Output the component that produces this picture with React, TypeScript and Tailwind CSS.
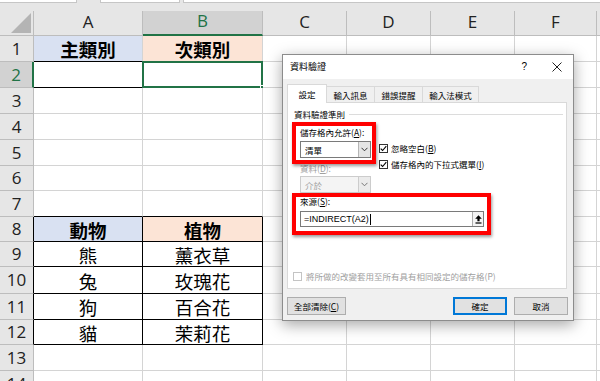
import React from "react";

const CJK = "font-['Noto_Sans_CJK_TC','Noto_Sans',sans-serif]";

const colW = ["w-[109px]", "w-[120px]", "w-[84px]", "w-[84px]", "w-[84px]", "w-[82px]"];
const letters = ["A", "B", "C", "D", "E", "F"];
const rowH: Record<number, string> = {
  1: "h-[26px]", 2: "h-[26px]", 3: "h-[26px]", 4: "h-[26px]", 5: "h-[26px]",
  6: "h-[25px]", 7: "h-[26px]", 8: "h-[25px]", 9: "h-[25px]", 10: "h-[27px]",
  11: "h-[26px]", 12: "h-[25px]", 13: "h-[26px]", 14: "h-[26px]",
};
const data: Record<number, [string, string]> = {
  1: ["主類別", "次類別"],
  8: ["動物", "植物"],
  9: ["熊", "薰衣草"],
  10: ["兔", "玫瑰花"],
  11: ["狗", "百合花"],
  12: ["貓", "茉莉花"],
};

function Cell({ r, c }: { r: number; c: number }) {
  const d = data[r];
  const txt = d && c < 2 ? d[c] : "";
  const blackR = c <= 1 && (r === 2 || (r >= 8 && r <= 12));
  const blackB = c <= 1 && (r === 1 || r === 2 || (r >= 7 && r <= 12));
  const head = r === 1 || r === 8;
  const bg = head ? (c === 0 ? "bg-[#d9e1f2]" : c === 1 ? "bg-[#fce4d6]" : "bg-white") : "bg-white";
  return (
    <div
      className={`${colW[c]} h-full relative flex items-center justify-center pt-[2px] border-r border-b ${
        blackR ? "border-r-black" : "border-r-[#d4d4d4]"
      } ${blackB ? "border-b-black" : "border-b-[#d4d4d4]"} ${bg} ${CJK} text-[18.5px] leading-none text-black ${
        head ? "font-bold" : "font-normal"
      }`}
    >
      {txt}
      {r === 2 && c === 1 && (
        <>
          <div className="absolute left-[-1px] top-[-1px] right-[-1px] bottom-[-1px] border-2 border-[#217346]" />
          <div className="absolute right-[-4px] bottom-[-4px] w-[6px] h-[6px] bg-[#217346] border border-white" />
        </>
      )}
    </div>
  );
}

function Sheet() {
  const rows = Array.from({ length: 14 }, (_, i) => i + 1);
  return (
    <div className="flex flex-col">
      <div className="h-[11px] bg-[#e6e6e6] flex items-start">
        <div className="w-[77px] h-[3px] bg-white border-r border-b border-[#c6c6c6]" />
        <div className="ml-[23px] w-[80px] h-[3px] bg-white border-x border-b border-[#c6c6c6]" />
        <div className="ml-[3px] flex-1 h-[3px] bg-white border-l border-b border-[#c6c6c6]" />
      </div>
      <div className="flex h-[25px]">
        <div className="w-[34px] h-full bg-[#e6e6e6] border-r border-b border-[#bdbdbd] flex items-end justify-end p-[2px]">
          <svg width="20" height="20" viewBox="0 0 20 20">
            <polygon points="20,0 20,20 0,20" fill="#b4b4b4" />
          </svg>
        </div>
        {letters.map((l, i) => (
          <div
            key={l}
            className={`${colW[i]} h-full flex items-center justify-center pb-[3px] border-r border-r-[#bdbdbd] font-['Open_Sans',sans-serif] text-[17px] ${
              i === 1
                ? "bg-[#d2d2d2] text-[#217346] border-b-2 border-b-[#217346]"
                : "bg-[#e6e6e6] text-[#222] border-b border-b-[#bdbdbd]"
            }`}
          >
            {l}
          </div>
        ))}
        <div className="flex-1 h-full bg-[#e6e6e6] border-b border-[#bdbdbd]" />
      </div>
      {rows.map((r) => (
        <div key={r} className={`flex ${rowH[r]}`}>
          <div
            className={`w-[34px] h-full flex items-center justify-center border-b border-b-[#bdbdbd] font-['Open_Sans',sans-serif] text-[17px] ${
              r === 2
                ? "bg-[#d2d2d2] text-[#217346] border-r-2 border-r-[#217346]"
                : r >= 8 && r <= 12
                ? "bg-[#e6e6e6] text-[#222] border-r border-r-black"
                : "bg-[#e6e6e6] text-[#222] border-r border-r-[#bdbdbd]"
            }`}
          >
            {r}
          </div>
          {letters.map((_, c) => (
            <Cell key={c} r={r} c={c} />
          ))}
          <div className="flex-1 h-full border-b border-[#d4d4d4] bg-white" />
        </div>
      ))}
    </div>
  );
}

function Check({ checked, disabled }: { checked?: boolean; disabled?: boolean }) {
  return (
    <span
      className={`w-[9px] h-[9px] shrink-0 border ${
        disabled ? "border-[#c4c4c4]" : "border-[#333333]"
      } bg-white flex items-center justify-center`}
    >
      {checked && (
        <svg width="7" height="7" viewBox="0 0 7 7">
          <path d="M0.7 3.6 L2.6 5.5 L6.3 1.1" stroke="#000" strokeWidth="1.1" fill="none" />
        </svg>
      )}
    </span>
  );
}

function Chevron({ color }: { color: string }) {
  return (
    <svg width="7" height="5" viewBox="0 0 7 5">
      <path d="M0.5 0.8 L3.5 3.8 L6.5 0.8" stroke={color} strokeWidth="1" fill="none" />
    </svg>
  );
}

function Dialog() {
  const t = `${CJK} text-[8.5px] leading-[12px]`;
  return (
    <div
      className={`absolute left-[282px] top-[54px] w-[292px] h-[267px] bg-[#f0f0f0] border border-[#8c8c8c] shadow-[0_4px_14px_rgba(0,0,0,0.35)] flex flex-col ${CJK} text-black`}
    >
      <div className="h-[24px] bg-white flex items-center pl-[7px] pr-[11px] shrink-0">
        <span className="text-[9px] leading-[12px]">資料驗證</span>
        <span className="ml-auto font-['Liberation_Sans',sans-serif] text-[10px] leading-[12px]">?</span>
        <span className="ml-[25px]">
          <svg width="10" height="10" viewBox="0 0 10 10">
            <path d="M0.5 0.5 L9.5 9.5 M9.5 0.5 L0.5 9.5" stroke="#222" strokeWidth="1" />
          </svg>
        </span>
      </div>
      <div className="bg-[#f0f0f0] flex-1 flex flex-col">
        <div className="ml-[4px] mt-[5px] h-[18px] flex items-end">
          <div className={`w-[40px] h-[19px] -mb-px relative z-10 bg-white border border-[#d9d9d9] border-b-0 flex items-center justify-center ${t}`}>
            設定
          </div>
          <div className={`w-[48px] h-[16px] bg-[#f0f0f0] border-t border-r border-[#d9d9d9] flex items-center justify-center ${t}`}>
            輸入訊息
          </div>
          <div className={`w-[48px] h-[16px] bg-[#f0f0f0] border-t border-r border-[#d9d9d9] flex items-center justify-center ${t}`}>
            錯誤提醒
          </div>
          <div className={`w-[56px] h-[16px] bg-[#f0f0f0] border-t border-r border-[#d9d9d9] flex items-center justify-center ${t}`}>
            輸入法模式
          </div>
        </div>
        <div className="ml-[4px] w-[280px] h-[187px] bg-white border border-[#d9d9d9] relative flex flex-col pt-[5px]">
          <div className={`flex items-center pl-[6px] pr-[3px] ${t}`}>
            <span>資料驗證準則</span>
            <span className="flex-1 h-px bg-[#dcdcdc] ml-[4px]" />
          </div>
          <div className={`mt-[6px] ml-[12px] ${t}`}>
            儲存格內允許(<u>A</u>):
          </div>
          <div className="mt-[3px] flex">
            <div className="ml-[12px] w-[71px] flex flex-col">
              <div className="h-[17px] border border-[#7a7a7a] bg-white flex items-center">
                <span className={`pl-[4px] ${t}`}>清單</span>
                <span className="ml-auto w-[12px] h-full bg-[#e5e5e5] border-l border-[#b5b5b5] flex items-center justify-center">
                  <Chevron color="#333" />
                </span>
              </div>
              <div className={`mt-[4px] text-[#a0a0a0] ${t}`}>
                資料(<u>D</u>):
              </div>
              <div className="mt-[2px] h-[17px] border border-[#cccccc] bg-[#f4f4f4] flex items-center">
                <span className={`pl-[4px] text-[#a0a0a0] ${t}`}>介於</span>
                <span className="ml-auto w-[12px] h-full bg-[#ebebeb] border-l border-[#cccccc] flex items-center justify-center">
                  <Chevron color="#777" />
                </span>
              </div>
            </div>
            <div className="ml-[8px] flex flex-col">
              <div className="h-[14px] flex items-center">
                <Check checked />
                <span className={`ml-[3px] ${t}`}>
                  忽略空白(<u>B</u>)
                </span>
              </div>
              <div className="mt-[2px] h-[14px] flex items-center">
                <Check checked />
                <span className={`ml-[3px] ${t}`}>
                  儲存格內的下拉式選單(<u>I</u>)
                </span>
              </div>
            </div>
          </div>
          <div className={`mt-[2px] ml-[12px] ${t}`}>
            來源(<u>S</u>):
          </div>
          <div className="mt-[4px] ml-[12px] w-[184px] h-[16px] border border-[#7a7a7a] bg-white flex items-center">
            <span className="pl-[3px] font-['Liberation_Sans',sans-serif] text-[9px] leading-[12px] text-black">
              =INDIRECT(A2)
            </span>
            <span className="ml-px w-px h-[11px] bg-black" />
            <span className="ml-auto w-[11px] h-full bg-[#f4f4f4] border-l border-[#adadad] flex items-center justify-center">
              <svg width="7" height="9" viewBox="0 0 7 9">
                <path d="M3.5 0.3 L6.8 3.8 H4.6 V6.2 H2.4 V3.8 H0.2 Z" fill="#000" />
                <rect x="0.5" y="7.4" width="6" height="1.2" fill="#000" />
              </svg>
            </span>
          </div>
          <div className="mt-[43px] ml-[5px] h-[12px] flex items-center">
            <Check disabled />
            <span className={`ml-[4px] text-[#a0a0a0] ${t}`}>將所做的改變套用至所有具有相同設定的儲存格(P)</span>
          </div>
          <div className="absolute left-[4px] top-[19px] w-[84px] h-[42px] border-4 border-[#ff0000] shadow-[1px_2px_3px_rgba(0,0,0,0.4)] z-20" />
          <div className="absolute left-[4px] top-[90px] w-[199px] h-[42px] border-4 border-[#ff0000] shadow-[1px_2px_3px_rgba(0,0,0,0.4)] z-20" />
        </div>
        <div className="mt-[8px] flex pl-[4px] pr-[5px]">
          <div className={`w-[59px] h-[18px] bg-[#e1e1e1] border border-[#adadad] flex items-center justify-center ${t}`}>
            全部清除(<u>C</u>)
          </div>
          <div className={`ml-auto w-[54px] h-[18px] bg-[#e1e1e1] border-2 border-[#0078d7] flex items-center justify-center ${t}`}>
            確定
          </div>
          <div className={`ml-[7px] w-[54px] h-[18px] bg-[#e1e1e1] border border-[#adadad] flex items-center justify-center ${t}`}>
            取消
          </div>
        </div>
      </div>
    </div>
  );
}

export default function App() {
  return (
    <div className="w-[600px] h-[381px] overflow-hidden relative bg-white">
      <Sheet />
      <Dialog />
    </div>
  );
}
